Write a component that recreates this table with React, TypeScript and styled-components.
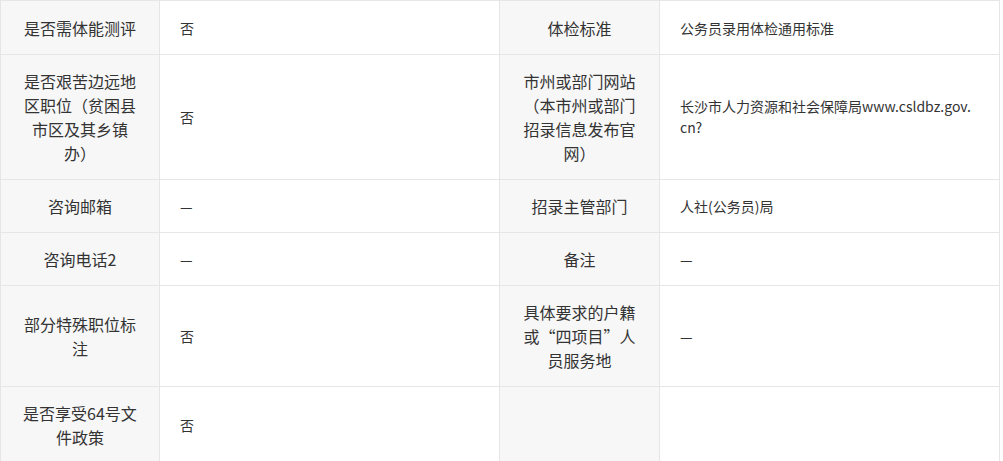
import * as React from 'react';
import styled, { createGlobalStyle } from 'styled-components';

const BORDER = '#e6e6e6';
const LABEL_BG = '#f7f7f7';
const TEXT = '#333';

const GlobalStyle = createGlobalStyle`
  body {
    margin: 0;
    background: #fff;
    font-family: "Noto Sans CJK SC", "Liberation Sans", sans-serif;
    color: ${TEXT};
  }
`;

interface Field {
  label: React.ReactNode;
  value: React.ReactNode;
}

const columns = [159, 340, 160, 340];

const rows: [Field, Field][] = [
  [
    { label: '是否需体能测评', value: '否' },
    { label: '体检标准', value: '公务员录用体检通用标准' },
  ],
  [
    { label: '是否艰苦边远地区职位（贫困县市区及其乡镇办）', value: '否' },
    {
      label: '市州或部门网站（本市州或部门招录信息发布官网）',
      value: (
        <>
          长沙市人力资源和社会保障局www.csldbz.gov.<wbr />cn?
        </>
      ),
    },
  ],
  [
    { label: '咨询邮箱', value: '—' },
    { label: '招录主管部门', value: '人社(公务员)局' },
  ],
  [
    { label: '咨询电话2', value: '—' },
    { label: '备注', value: '—' },
  ],
  [
    { label: '部分特殊职位标注', value: '否' },
    { label: '具体要求的户籍或“四项目”人员服务地', value: '—' },
  ],
  [
    { label: '是否享受64号文件政策', value: '否' },
    { label: '', value: '' },
  ],
];

function InfoTable() {
  return (
    <InfoTable.Table>
      <colgroup>
        {columns.map((w, i) => (
          <InfoTable.Col key={i} $width={w} />
        ))}
      </colgroup>
      <tbody>
        {rows.map((row, i) => (
          <InfoTable.Row key={i}>
            {row.map((field, j) => (
              <React.Fragment key={j}>
                <InfoTable.Label>{field.label}</InfoTable.Label>
                <InfoTable.Value>{field.value}</InfoTable.Value>
              </React.Fragment>
            ))}
          </InfoTable.Row>
        ))}
      </tbody>
    </InfoTable.Table>
  );
}

InfoTable.Table = styled.table`
  width: 999px;
  table-layout: fixed;
  border-collapse: collapse;
  border: 1px solid ${BORDER};
`;

InfoTable.Col = styled.col<{ $width: number }>`
  width: ${(p) => p.$width}px;
`;

InfoTable.Row = styled.tr`
  &:first-child td {
    padding-top: 15px;
  }
`;

InfoTable.Label = styled.td`
  padding: 14px 20px;
  background-color: ${LABEL_BG};
  border: 1px solid ${BORDER};
  font-size: 16px;
  line-height: 24px;
  text-align: center;
  vertical-align: middle;
`;

InfoTable.Value = styled.td`
  padding: 14px 20px;
  background-color: #fff;
  border: 1px solid ${BORDER};
  font-size: 14px;
  line-height: 21px;
  text-align: left;
  vertical-align: middle;
`;

export default function App() {
  return (
    <>
      <GlobalStyle />
      <InfoTable />
    </>
  );
}
